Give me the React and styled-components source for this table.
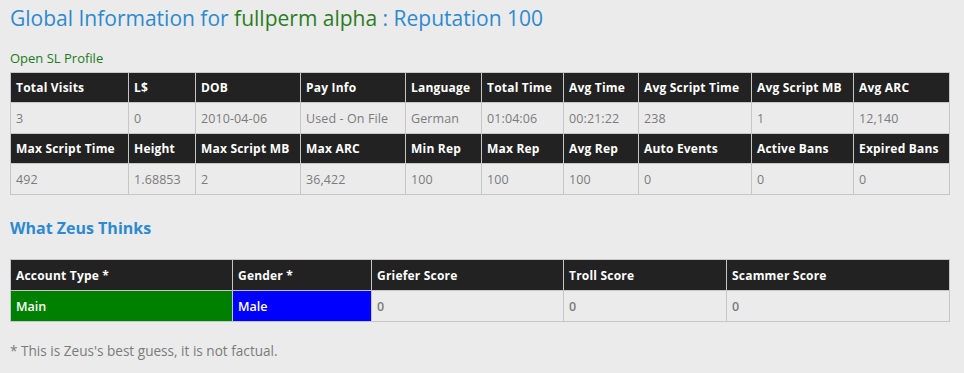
import styled, { createGlobalStyle } from "styled-components";

const GlobalStyle = createGlobalStyle`
  html, body {
    margin: 0;
    padding: 0;
    background: #ebebeb;
    font-family: "Open Sans", "Liberation Sans", sans-serif;
  }
`;

const statRows = [
  {
    heads: ["Total Visits", "L$", "DOB", "Pay Info", "Language", "Total Time", "Avg Time", "Avg Script Time", "Avg Script MB", "Avg ARC"],
    values: ["3", "0", "2010-04-06", "Used - On File", "German", "01:04:06", "00:21:22", "238", "1", "12,140"],
  },
  {
    heads: ["Max Script Time", "Height", "Max Script MB", "Max ARC", "Min Rep", "Max Rep", "Avg Rep", "Auto Events", "Active Bans", "Expired Bans"],
    values: ["492", "1.68853", "2", "36,422", "100", "100", "100", "0", "0", "0"],
  },
];

const statCols = [118, 67, 105, 105, 76, 82, 75, 113, 102, 96];

const zeusCols = [222, 139, 192, 163, 223];
const zeusHeads = ["Account Type *", "Gender *", "Griefer Score", "Troll Score", "Scammer Score"];
const zeusValues = [
  { text: "Main", tone: "green" },
  { text: "Male", tone: "blue" },
  { text: "0" },
  { text: "0" },
  { text: "0" },
];

export default function App() {
  return (
    <Page>
      <GlobalStyle />
      <Title>
        Global Information for <Name>fullperm alpha</Name> : Reputation 100
      </Title>
      <ProfileLink href="#">Open SL Profile</ProfileLink>

      <Grid $gap={5}>
        <colgroup>
          {statCols.map((w, i) => (
            <col key={i} style={{ width: w }} />
          ))}
        </colgroup>
        <tbody>
          {statRows.map((row, r) => [
            <tr key={`h${r}`}>
              {row.heads.map((h) => (
                <HeadCell key={h}>{h}</HeadCell>
              ))}
            </tr>,
            <tr key={`v${r}`}>
              {row.values.map((v, i) => (
                <ValueCell key={i}>{v}</ValueCell>
              ))}
            </tr>,
          ])}
        </tbody>
      </Grid>

      <Section>What Zeus Thinks</Section>

      <Grid $gap={20}>
        <colgroup>
          {zeusCols.map((w, i) => (
            <col key={i} style={{ width: w }} />
          ))}
        </colgroup>
        <tbody>
          <tr>
            {zeusHeads.map((h) => (
              <HeadCell key={h} $tall>
                {h}
              </HeadCell>
            ))}
          </tr>
          <tr>
            {zeusValues.map((v, i) => (
              <ScoreCell key={i} $tone={v.tone}>
                {v.text}
              </ScoreCell>
            ))}
          </tr>
        </tbody>
      </Grid>

      <Note>* This is Zeus's best guess, it is not factual.</Note>
    </Page>
  );
}

const Page = styled.div`
  display: flex;
  flex-direction: column;
  align-items: flex-start;
  width: 939px;
  padding: 4px 10px 0;
`;

const Title = styled.h1`
  margin: 0;
  font-size: 21px;
  font-weight: 400;
  line-height: 28px;
  color: #2c8ad0;
`;

const Name = styled.span`
  color: #2a7d1f;
`;

const ProfileLink = styled.a`
  margin-top: 18px;
  font-size: 13px;
  line-height: 17px;
  color: #1c7a1c;
  text-decoration: none;
`;

const Grid = styled.table`
  margin-top: ${(p) => p.$gap}px;
  width: 939px;
  table-layout: fixed;
  border-collapse: collapse;
  border: 1px solid #c6c6c6;
  font-size: 12px;
`;

const HeadCell = styled.td`
  height: ${(p) => (p.$tall ? 30 : 29)}px;
  padding: 0 5px;
  background: #222222;
  color: #ffffff;
  font-weight: 700;
  letter-spacing: 0.2px;
  white-space: nowrap;
  overflow: hidden;
  border: 1px solid #c6c6c6;
  border-top: none;
  border-bottom: none;
`;

const ValueCell = styled.td`
  height: 30px;
  padding: 0 5px;
  font-size: 12.5px;
  color: #7b7b7b;
  letter-spacing: 0.1px;
  white-space: nowrap;
  overflow: hidden;
  border: 1px solid #c6c6c6;
`;

const toneColors = {
  green: "#008000",
  blue: "#0000ff",
};

const ScoreCell = styled.td`
  height: 30px;
  padding: 0 5px;
  font-size: 12.5px;
  font-weight: 600;
  color: ${(p) => (p.$tone ? "#ffffff" : "#7b7b7b")};
  background: ${(p) => toneColors[p.$tone] || "transparent"};
  border: 1px solid #c6c6c6;
`;

const Section = styled.h2`
  margin: 22px 0 0;
  font-size: 16px;
  font-weight: 700;
  line-height: 22px;
  color: #2c8ad0;
`;

const Note = styled.p`
  margin: 20px 0 0;
  font-size: 13.6px;
  line-height: 18px;
  color: #7b7b7b;
`;
